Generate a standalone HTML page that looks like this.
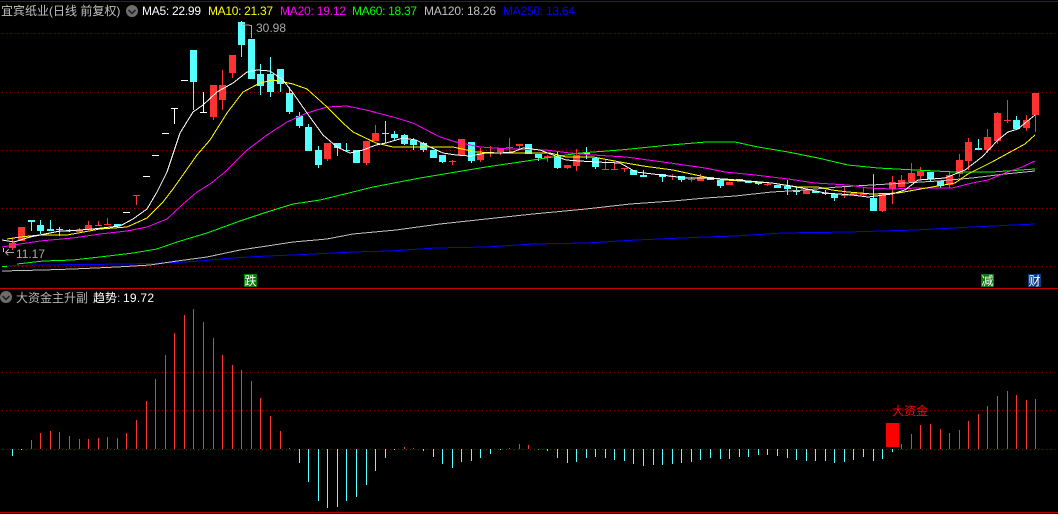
<!DOCTYPE html>
<html lang="zh">
<head>
<meta charset="utf-8">
<title>宜宾纸业</title>
<style>
html,body{margin:0;padding:0;background:#000;width:1058px;height:514px;overflow:hidden}
svg{display:block}
text{font-family:"Liberation Sans","WenQuanYi Zen Hei","Noto Sans CJK SC",sans-serif;font-size:12px;white-space:pre}
</style>
</head>
<body>
<svg width="1058" height="514" viewBox="0 0 1058 514" xmlns="http://www.w3.org/2000/svg">
<rect width="1058" height="514" fill="#000"/>
<g shape-rendering="crispEdges">
<!-- frame lines -->
<path d="M0 1.5H1058" stroke="#800000" fill="none"/>
<path d="M0 288.5H1058" stroke="#c80000" fill="none"/>
<path d="M0 512.5H1058" stroke="#b80000" fill="none"/>
<!-- dotted grid -->
<path d="M2 33.5H1058M2 92.5H1058M2 150.5H1058M2 208.5H1058M2 266.5H1058M2 372.5H1058M2 410.5H1058M2 449.5H1058" stroke="#8a0000" stroke-dasharray="1 3" fill="none"/>

<!-- red candle bodies -->
<path fill="#ff3232" d="M9 243h7v5h-7zM18 227h7v14h-7zM76 230h7v2h-7zM85 225h7v5h-7zM210 85h7v32h-7zM219 85h7v15h-7zM229 55h7v18h-7zM324 143h7v16h-7zM363 141h7v22h-7zM372 133h7v8h-7zM458 139h7v16h-7zM477 153h7v7h-7zM497 148h7v4h-7zM516 144h7v2h-7zM544 156h7v2h-7zM564 165h7v3h-7zM573 155h7v11h-7zM697 177h7v4h-7zM726 182h7v3h-7zM803 190h7v4h-7zM841 195h7v1h-7zM850 193h7v2h-7zM860 193h7v2h-7zM879 193h7v18h-7zM889 182h7v7h-7zM898 180h7v7h-7zM908 173h7v9h-7zM917 171h7v5h-7zM946 175h7v10h-7zM956 160h7v14h-7zM965 142h7v19h-7zM984 137h7v13h-7zM994 113h7v28h-7zM1023 120h7v8h-7zM1032 93h7v22h-7z
M95 225h7v1h-7zM104 224h7v1h-7zM133 195h7v1h-7zM449 161h7v1h-7zM487 152h7v1h-7zM506 147h7v1h-7zM602 169h7v1h-7zM611 169h7v1h-7zM621 168h7v1h-7zM669 176h7v1h-7zM688 179h7v1h-7zM764 184h7v1h-7zM1004 120h7v1h-7z"/>
<!-- red wicks -->
<path fill="none" stroke="#ff3232" d="M12.5 238V250M79.5 228V232M88.5 221V225M98.5 221V225M107.5 218V225M136.5 195V205M213.5 117V120M222.5 70V110M232.5 73V78M327.5 159V161M366.5 163V165M375.5 125V133M452.5 160V165M480.5 148V162M490.5 146V157M500.5 152V155M509.5 138V153M519.5 146V150M547.5 155V162M567.5 168V169M576.5 149V171M605.5 160V170M614.5 162V170M624.5 168V172M672.5 174V180M691.5 177V182M700.5 174V177M767.5 182V186M844.5 186V198M863.5 187V196M882.5 211V212M892.5 176V204M901.5 175V180M911.5 163V173M920.5 167V180M949.5 172V188M959.5 154V177M968.5 138V170M987.5 129V153M997.5 112V144M1007.5 100V123M1026.5 115V131M1035.5 115V132"/>

<!-- cyan candle bodies -->
<path fill="#54ffff" d="M28 220h7v2h-7zM37 225h7v6h-7zM47 229h7v2h-7zM56 229h7v1h-7zM66 230h7v1h-7zM114 224h7v2h-7zM190 50h7v32h-7zM238 22h7v23h-7zM248 39h7v40h-7zM257 74h7v12h-7zM267 74h7v18h-7zM277 69h7v15h-7zM286 93h7v19h-7zM296 116h7v10h-7zM305 127h7v24h-7zM315 150h7v15h-7zM334 143h7v5h-7zM343 150h7v1h-7zM353 150h7v13h-7zM382 133h7v1h-7zM391 134h7v4h-7zM401 135h7v9h-7zM410 140h7v5h-7zM420 143h7v7h-7zM430 150h7v8h-7zM439 155h7v7h-7zM468 142h7v19h-7zM525 144h7v10h-7zM535 154h7v4h-7zM554 156h7v12h-7zM583 152h7v2h-7zM592 158h7v9h-7zM630 170h7v5h-7zM640 175h7v2h-7zM659 174h7v3h-7zM678 176h7v4h-7zM707 177h7v3h-7zM717 180h7v6h-7zM736 179h7v2h-7zM745 181h7v2h-7zM755 182h7v2h-7zM774 185h7v3h-7zM784 186h7v3h-7zM793 190h7v2h-7zM812 191h7v2h-7zM822 193h7v1h-7zM831 194h7v4h-7zM870 198h7v13h-7zM927 172h7v7h-7zM937 181h7v5h-7zM975 148h7v2h-7zM1013 120h7v9h-7z"/>
<!-- cyan wicks -->
<path fill="none" stroke="#54ffff" d="M31.5 222V231M40.5 220V234M50.5 220V229M59.5 227V236M69.5 229V232M117.5 226V228M193.5 82V110M241.5 45V57M241.5 21V22M260.5 64V95M270.5 57V97M280.5 84V92M289.5 87V114M299.5 112V128M308.5 124V127M318.5 146V168M337.5 148V156M346.5 143V152M385.5 121V143M394.5 131V141M404.5 134V145M413.5 138V150M423.5 142V152M442.5 162V163M471.5 161V163M538.5 158V161M557.5 152V169M586.5 147V159M595.5 167V169M643.5 170V175M662.5 177V182M681.5 180V182M720.5 186V188M758.5 184V185M787.5 180V195M796.5 187V195M825.5 190V195M834.5 198V201M873.5 174V198M930.5 179V181M940.5 186V188M978.5 139V148M1016.5 116V120"/>

<!-- white dashes -->
<path fill="#fff" d="M123 212h7v1h-7zM143 176h7v1h-7zM152 155h7v1h-7zM162 133h7v1h-7zM171 108h7v1h-7zM181 80h7v1h-7zM200 112h7v1h-7z"/>
<path fill="none" stroke="#fff" d="M174.5 108V124M203.5 92V112"/>

<!-- MA250 -->
<polyline fill="none" stroke="#0000ff" stroke-width="1" points="2,266 40,265 127,264 167,263 200,261 233,258 267,256 293,255 353,252 390,251 436,248 486,247 533,244 586,243 636,240 706,237 735,236 782,233 848,232 915,230 972,227 1035,224"/>
<!-- MA120 -->
<polyline fill="none" stroke="#c0c0c0" stroke-width="1" points="2,271 43,270 73,269 117,267 150,265 177,261 207,257 240,250 267,246 293,242 327,239 353,234 396,230 440,224 486,219 533,214 586,209 630,204 673,201 706,198 735,196 772,192 805,190 838,187 872,185 905,183 938,181 972,178 1005,174 1035,171"/>
<!-- MA60 -->
<polyline fill="none" stroke="#00ff00" stroke-width="1" points="17,264 43,261 73,260 100,257 133,253 157,249 177,242 207,233 240,221 267,212 293,204 320,200 353,192 373,187 420,178 456,172 486,167 520,162 546,158 580,153 620,150 670,145 706,142 735,142 758,147 788,152 818,158 848,165 878,168 915,170 955,172 992,172 1035,169"/>
<path fill="#00ff00" d="M2 266h5v1h-5z"/>
<!-- MA20 -->
<polyline fill="none" stroke="#ff00ff" stroke-width="1" points="2,247 20,244 40,241 73,238 100,234 127,231 147,227 167,219 183,204 197,192 210,184 225,172 247,150 267,135 287,122 307,113 327,107 347,106 366,110 393,117 413,123 440,137 456,142 480,147 510,149 546,150 570,153 593,155 626,157 670,163 705,168 725,172 755,175 788,179 815,183 848,185 868,188 892,189 918,188 952,188 972,183 988,180 1005,173 1022,167 1035,161"/>
<!-- MA10 -->
<polyline fill="none" stroke="#ffff00" stroke-width="1" points="7,239 20,237 40,235 67,235 100,229 127,227 147,218 163,202 173,189 185,172 197,155 210,140 227,113 243,92 260,83 273,80 293,84 307,89 327,107 343,123 353,132 376,143 393,147 420,147 453,147 476,152 500,153 526,153 550,153 566,157 593,157 620,162 643,166 673,170 705,177 725,180 772,183 798,187 818,187 832,190 848,192 872,194 898,193 932,187 955,183 968,174 992,162 1012,151 1025,144 1035,135"/>
<!-- MA5 -->
<polyline fill="none" stroke="#ffffff" stroke-width="1" points="2,240 14,242 30,237 40,235 60,231 67,231 93,229 120,226 133,219 147,209 157,192 167,172 180,133 193,112 203,105 217,92 233,83 247,72 257,70 270,71 283,80 293,93 307,113 323,135 337,147 350,153 363,150 376,145 386,143 403,138 416,140 430,147 443,153 456,155 470,156 486,153 500,153 513,152 523,148 540,150 553,155 566,160 580,161 596,162 620,163 636,172 653,174 686,178 705,178 725,179 772,183 802,188 825,193 852,195 868,197 892,194 905,190 918,180 945,178 965,170 982,157 998,140 1008,132 1018,129 1025,123 1035,115"/>

<!-- annotation arrows -->
<path fill="none" stroke="#a8a8a8" d="M242.5 24.5L251.5 25.5V38M5.5 252.5H14M5.5 252.5L8.5 249.5M5.5 252.5L8.5 255.5"/>
<path fill="none" stroke="#54ffff" d="M3.5 248V252"/>

<!-- lower panel red bars -->
<path fill="none" stroke="#ff3232" d="M31.5 440V449M40.5 433V449M50.5 431V449M59.5 432V449M69.5 436V449M79.5 439V449M88.5 439V449M98.5 438V449M107.5 437V449M117.5 438V449M126.5 433V449M136.5 420V449M146.5 401V449M155.5 379V449M165.5 355V449M174.5 333V449M184.5 315V449M193.5 309V449M203.5 322V449M213.5 338V449M222.5 355V449M232.5 365V449M241.5 370V449M251.5 381V449M260.5 398V449M270.5 416V449M280.5 431V449M289.5 448V449M404.5 447V449M413.5 448V449M509.5 448V449M519.5 444V449M528.5 445V449M538.5 449V450M901.5 444V449M911.5 434V449M920.5 425V449M930.5 424V449M940.5 429V449M949.5 433V449M959.5 430V449M968.5 421V449M978.5 414V449M987.5 406V449M997.5 396V449M1007.5 391V449M1016.5 395V449M1026.5 400V449M1035.5 399V449"/>
<!-- lower panel cyan bars -->
<path fill="none" stroke="#54ffff" d="M12.5 449V456M21.5 449V450M299.5 449V463M308.5 449V482M318.5 449V501M327.5 449V508M337.5 449V507M346.5 449V501M356.5 449V497M366.5 449V485M375.5 449V471M385.5 449V458M394.5 449V450M423.5 449V451M433.5 449V457M442.5 449V464M452.5 449V468M461.5 449V462M471.5 449V461M480.5 449V458M490.5 449V454M500.5 449V450M547.5 449V451M557.5 449V458M567.5 449V463M576.5 449V462M586.5 449V458M595.5 449V457M605.5 449V458M614.5 449V460M624.5 449V461M633.5 449V464M643.5 449V466M653.5 449V465M662.5 449V465M672.5 449V464M681.5 449V463M691.5 449V462M700.5 449V460M710.5 449V458M720.5 449V459M729.5 449V459M739.5 449V457M748.5 449V457M758.5 449V455M767.5 449V455M777.5 449V456M787.5 449V458M796.5 449V460M806.5 449V461M815.5 449V461M825.5 449V461M834.5 449V463M844.5 449V462M853.5 449V460M863.5 449V457M873.5 449V461M882.5 449V459M892.5 449V452"/>
<!-- big red block -->
<rect x="886" y="423" width="13" height="24" fill="#ff0000"/>

<!-- badges -->
<rect x="244" y="274" width="13" height="13" fill="#0a7a0a"/>
<rect x="981" y="274" width="13" height="13" fill="#0a7a0a"/>
<rect x="1028" y="274" width="13" height="13" fill="#0c3d80"/>
</g>

<!-- header text -->
<text x="1" y="15" fill="#c0c0c0">宜宾纸业(日线 前复权)</text>
<circle cx="132" cy="11" r="6" fill="#6e6e6e"/>
<path d="M128.5 10L132 13.5L135.5 10" fill="none" stroke="#222" stroke-width="1.6"/>
<text x="142" y="15" fill="#ffffff" textLength="59">MA5: 22.99</text>
<text x="208" y="15" fill="#ffff00" textLength="65">MA10: 21.37</text>
<text x="280" y="15" fill="#ff00ff" textLength="66">MA20: 19.12</text>
<text x="352" y="15" fill="#00ff00" textLength="65">MA60: 18.37</text>
<text x="424" y="15" fill="#c0c0c0" textLength="72">MA120: 18.26</text>
<text x="503" y="15" fill="#0000ff" textLength="72">MA250: 13.64</text>

<text x="256" y="32" fill="#a8a8a8" textLength="30">30.98</text>
<text x="16" y="258" fill="#a8a8a8" textLength="29">11.17</text>

<!-- lower panel header -->
<circle cx="6" cy="297" r="6" fill="#6e6e6e"/>
<path d="M2.5 296L6 299.5L9.5 296" fill="none" stroke="#222" stroke-width="1.6"/>
<text x="16" y="302" fill="#b4b4b4">大资金主升副</text>
<text x="93" y="302" fill="#ffffff">趋势</text>
<text x="117" y="302" fill="#c8c8c8">:</text>
<text x="123" y="302" fill="#ffffff" textLength="31">19.72</text>

<text x="892" y="415" fill="#ff0000">大资金</text>
<text x="244.5" y="285" fill="#ffffff">跌</text>
<text x="981.5" y="285" fill="#ffffff">减</text>
<text x="1028.5" y="285" fill="#ffffff">财</text>
</svg>
</body>
</html>
